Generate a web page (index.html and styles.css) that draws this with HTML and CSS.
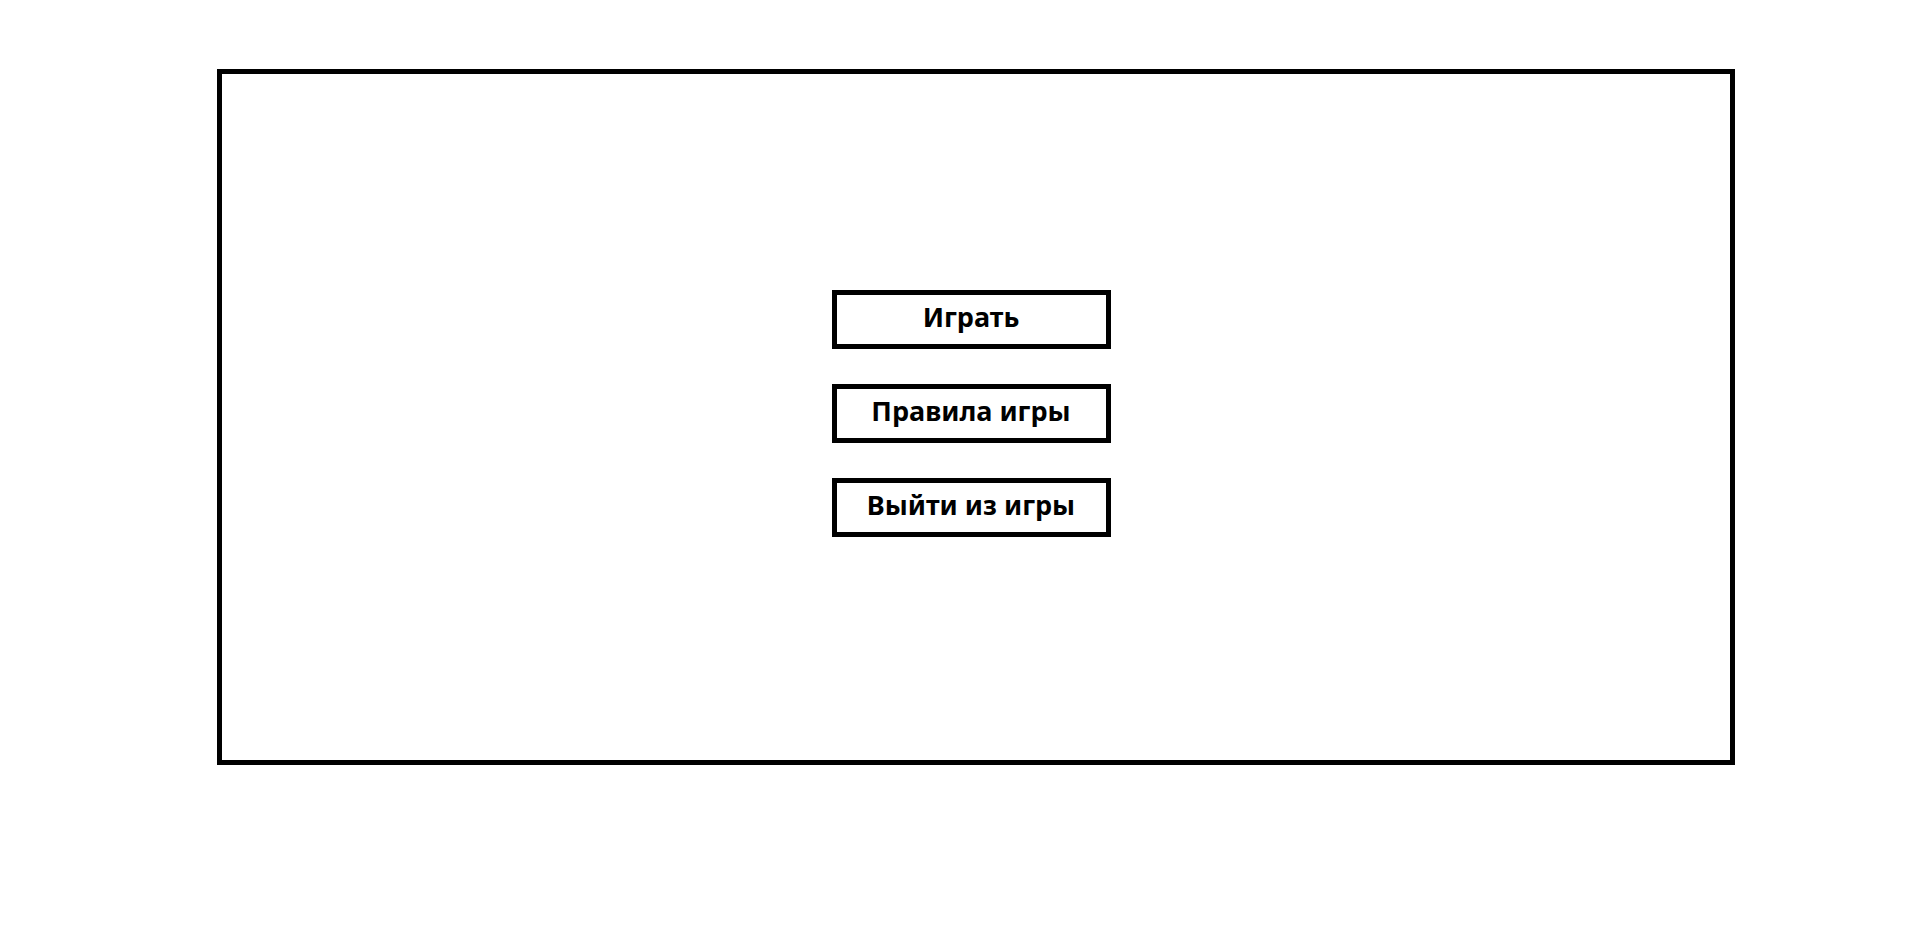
FILE: index.html
```html
<!DOCTYPE html>
<html lang="ru">
<head>
<meta charset="utf-8">
<title>Меню игры</title>
<link rel="stylesheet" href="styles.css">
</head>
<body>
<main class="screen">
  <nav class="menu" aria-label="Меню игры">
    <button class="menu-button" type="button">Играть</button>
    <button class="menu-button" type="button">Правила игры</button>
    <button class="menu-button" type="button">Выйти из игры</button>
  </nav>
</main>
</body>
</html>
```
FILE: styles.css
```css
* {
  box-sizing: border-box;
}

body {
  margin: 0;
  padding: 69px 179px 69px 217px;
  background: #fff;
  color: #000;
}

.screen {
  display: flex;
  justify-content: center;
  padding: 216px 10px 223px 0;
  border: 5px solid #000;
}

.menu {
  display: flex;
  flex-direction: column;
  gap: 35px;
}

.menu-button {
  width: 279px;
  padding: 4px 0 9px;
  border: 5px solid #000;
  background: #fff;
  color: inherit;
  font-family: "Noto Sans", "Open Sans", sans-serif;
  font-size: 27px;
  font-weight: 700;
  line-height: 36px;
  text-align: center;
  cursor: pointer;
}
```
